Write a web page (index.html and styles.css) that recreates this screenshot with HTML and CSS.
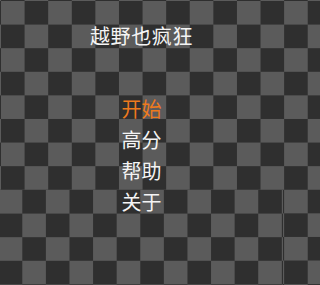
FILE: index.html
```html
<!DOCTYPE html>
<html lang="zh-CN">
<head>
<meta charset="utf-8">
<title>越野也疯狂</title>
<link rel="stylesheet" href="styles.css">
</head>
<body>
<div class="screen">
  <div class="board board-top"></div>
  <div class="board board-bottom"></div>
  <div class="content">
    <h1 class="title">越野也疯狂</h1>
    <ul class="menu">
      <li class="item active">开始</li>
      <li class="item">高分</li>
      <li class="item">帮助</li>
      <li class="item">关于</li>
    </ul>
  </div>
</div>
</body>
</html>
```
FILE: styles.css
```css
html, body {
  margin: 0;
  padding: 0;
}
body {
  background-color: #2f2f2f;
  background-image: repeating-conic-gradient(#2f2f2f 0 25%, #5b5b5b 0 50%);
  background-size: 47.2px 47.2px;
  background-position: 1px 1px;
}
.screen {
  width: 283px;
  height: 285px;
  display: grid;
  grid-template-columns: 283px;
  grid-template-rows: 190px 95px;
  overflow: hidden;
  font-family: "Noto Sans CJK SC", "Noto Sans", sans-serif;
}
.board {
  grid-column: 1;
  background-image: repeating-conic-gradient(#2f2f2f 0 25%, #5b5b5b 0 50%);
  background-size: 47.2px 47.2px;
}
.board-top {
  grid-row: 1;
  background-position: 1px 1px;
}
.board-bottom {
  grid-row: 2;
  background-position: -1.3px 0;
}
.content {
  grid-column: 1;
  grid-row: 1 / 3;
  display: flex;
  flex-direction: column;
  align-items: center;
  padding-top: 24px;
}
.title {
  margin: 0;
  font-size: 20px;
  font-weight: normal;
  line-height: 24px;
  color: #f4f4f4;
  letter-spacing: 0.6px;
}
.menu {
  list-style: none;
  margin: 45px 0 0 0;
  padding: 0;
  display: flex;
  flex-direction: column;
  align-items: center;
}
.item {
  font-size: 20px;
  line-height: 31px;
  color: #f4f4f4;
}
.item.active {
  color: #ee7a1d;
}
```
